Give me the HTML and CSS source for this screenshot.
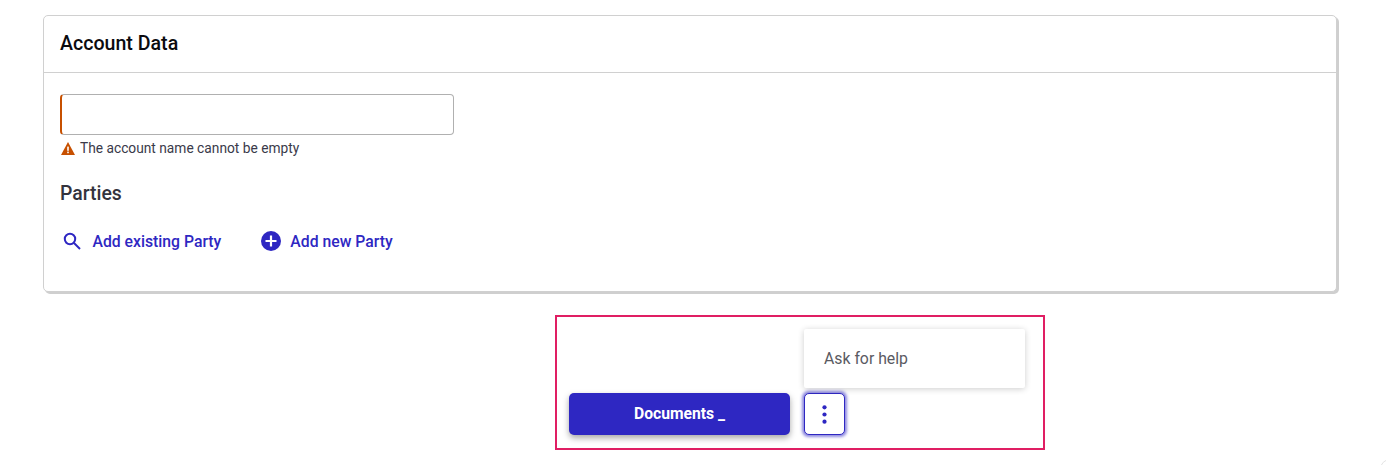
FILE: index.html
```html
<!DOCTYPE html>
<html lang="en">
<head>
<meta charset="utf-8">
<title>Account Data</title>
<link rel="stylesheet" href="styles.css">
</head>
<body>
<main class="page">
  <section class="card">
    <header class="card-head"><h1 class="card-title">Account Data</h1></header>
    <div class="card-body">
      <div class="field"></div>
      <p class="error">
        <svg class="error-icon" viewBox="0 0 14 13" aria-hidden="true"><path fill="#c75000" d="M7 0 14 13H0Z"/><rect x="6.2" y="4.6" width="1.6" height="4.2" fill="#fff"/><rect x="6.2" y="9.6" width="1.6" height="1.6" fill="#fff"/></svg>
        <span>The account name cannot be empty</span>
      </p>
      <h2 class="section-title">Parties</h2>
      <div class="actions">
        <a class="action action-search">
          <svg class="icon-search" viewBox="0 0 18 18" aria-hidden="true"><circle cx="7" cy="7" r="5.2" fill="none" stroke="#2e27c2" stroke-width="2"/><path d="M11 11 17 17" stroke="#2e27c2" stroke-width="2" fill="none"/></svg>
          <span>Add existing Party</span>
        </a>
        <a class="action action-new">
          <svg class="icon-plus" viewBox="0 0 20 20" aria-hidden="true"><circle cx="10" cy="10" r="10" fill="#2e27c2"/><path d="M10 4.5v11M4.5 10h11" stroke="#fff" stroke-width="2.2"/></svg>
          <span>Add new Party</span>
        </a>
      </div>
    </div>
  </section>
  <section class="demo">
    <div class="menu"><span>Ask for help</span></div>
    <button class="primary">Documents _</button>
    <button class="more" aria-label="More">
      <svg viewBox="0 0 4 18" class="dots" aria-hidden="true"><circle cx="2" cy="2.2" r="2" fill="#2e27c2"/><circle cx="2" cy="9" r="2" fill="#2e27c2"/><circle cx="2" cy="15.8" r="2" fill="#2e27c2"/></svg>
    </button>
  </section>
</main>
<div class="corner"></div>
</body>
</html>
```
FILE: styles.css
```css
* { box-sizing: border-box; }
html, body { margin: 0; height: 465px; overflow: hidden; background: #fff; }
body { font-family: Roboto, "Liberation Sans", sans-serif; position: relative; }
.page { padding: 15px 49px 0 43px; }
.card {
  height: 277px;
  border: 1px solid #d0d0d0;
  border-radius: 5px;
  box-shadow: 2px 2px 0 #cfcfcf;
  background: #fff;
}
.card-head { height: 57px; padding: 0 16px 2px; display: flex; align-items: center; border-bottom: 1px solid #d0d0d0; }
.card-title { margin: 0; font-size: 19.6px; font-weight: 500; color: #0b0b0f; }
.card-body { padding: 21px 16px 0; }
.field { width: 394px; height: 41px; border: 1px solid #b0b0b0; border-left: 2px solid #c75000; border-radius: 4px; }
.error { margin: 5px 0 0; display: flex; align-items: center; gap: 5px; height: 16px; font-size: 13.75px; color: #3a3a4a; padding-left: 1px; }
.error-icon { width: 14px; height: 13px; }
.section-title { margin: 25px 0 0; font-size: 19.4px; font-weight: 500; line-height: 26px; color: #33333d; }
.actions { margin-top: 22px; display: flex; align-items: center; height: 24px; }
.action { display: flex; align-items: center; font-size: 15.75px; font-weight: 500; color: #2e27c2; }
.icon-search { width: 18px; height: 18px; margin-left: 3px; margin-right: 11.5px; }
.icon-plus { width: 20px; height: 20px; margin-right: 9.5px; }
.action-new { margin-left: 39.5px; }
.demo {
  position: relative;
  margin: 23px 0 0 512px;
  width: 490px;
  height: 135px;
  border: 2px solid #e01e63;
  display: flex;
  align-items: flex-start;
  padding: 76px 0 0 12px;
}
.menu {
  position: absolute;
  left: 247px;
  top: 12px;
  width: 221px;
  height: 59px;
  padding: 0 20px;
  display: flex;
  align-items: center;
  font-size: 15.8px;
  color: #5a5a62;
  background: #fff;
  border-radius: 2px;
  box-shadow: 0 1px 6px rgba(0,0,0,.2);
}
.primary {
  width: 221px;
  height: 42px;
  border: 0;
  border-radius: 5px;
  background: #2e27c2;
  color: #fff;
  font: 700 15.7px Roboto, "Liberation Sans", sans-serif;
  box-shadow: 0 3px 6px rgba(0,0,0,.35);
  padding: 0 0 2px;
}
.more {
  margin-left: 14px;
  width: 41px;
  height: 42px;
  padding: 0;
  border: 1px solid #2e27c2;
  border-radius: 5px;
  background: #fff;
  box-shadow: 0 0 3px 1.5px rgba(46,39,194,.55);
  display: flex;
  align-items: center;
  justify-content: center;
}
.dots { width: 5px; height: 19px; }
.corner {
  position: absolute;
  right: -14px;
  bottom: -14px;
  width: 20px;
  height: 20px;
  border: 1px solid #e4e4e4;
  border-radius: 50%;
}
```
